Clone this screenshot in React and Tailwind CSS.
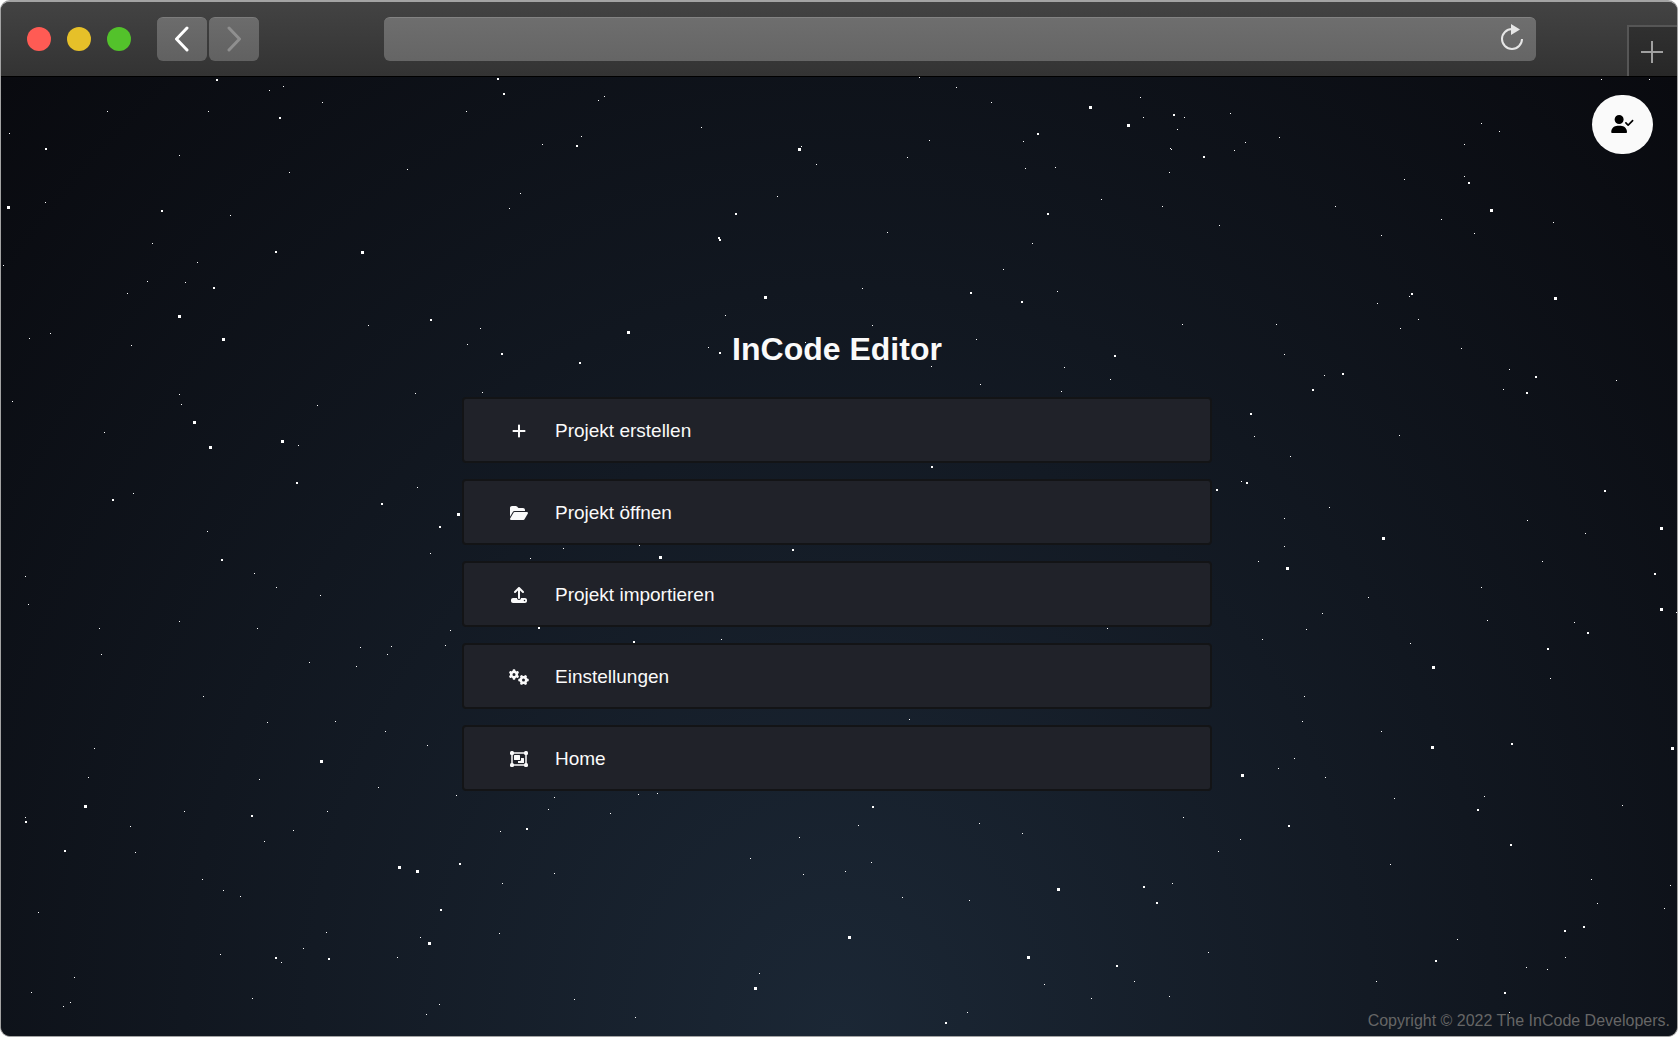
import React from "react";
import {
  FaFolderOpen,
  FaGears,
  FaPlus,
  FaUpload,
  FaUserCheck,
} from "react-icons/fa6";

const SMALL_STARS = [
  [269,90],[283,86],[322,102],[107,111],[208,111],[466,111],[9,133],[179,155],[289,172],[407,169],
  [45,202],[230,215],[152,243],[197,262],[147,281],[185,282],[127,293],[3,265],[50,333],[29,338],
  [131,345],[368,325],[480,328],[467,344],[179,394],[181,404],[12,401],[317,405],[415,393],[482,392],
  [104,432],[298,445],[133,493],[417,487],[207,531],[430,553],[563,548],[639,545],[598,100],[604,96],
  [701,127],[581,136],[542,144],[801,146],[816,164],[520,193],[509,208],[777,196],[725,315],[708,347],
  [805,342],[919,77],[956,87],[991,102],[1140,97],[1143,117],[1184,117],[1230,113],[1177,129],[1023,141],
  [929,140],[907,157],[1245,142],[1234,150],[1279,137],[1170,148],[1171,149],[1025,168],[1055,167],[1169,172],
  [1101,199],[1162,206],[1219,225],[887,232],[1032,243],[1003,269],[1335,206],[1404,179],[1464,144],[1481,123],
  [1499,131],[1464,176],[1441,219],[1474,233],[1381,235],[1553,222],[1601,79],[1649,79],[862,288],[1057,291],
  [872,325],[1182,324],[1276,324],[1377,303],[1409,296],[1418,319],[1400,328],[976,339],[931,366],[1064,367],
  [1110,379],[980,384],[1061,391],[1284,354],[1324,375],[1461,348],[1509,369],[1503,389],[1616,380],[1254,436],
  [1399,435],[1290,456],[1241,481],[1329,507],[1284,518],[1284,546],[1527,520],[1585,533],[25,576],[28,604],
  [254,573],[276,587],[320,595],[179,621],[99,628],[257,628],[101,654],[360,647],[391,646],[387,654],
  [309,662],[356,666],[450,630],[445,645],[203,696],[267,722],[335,721],[385,731],[94,748],[427,745],
  [88,777],[259,779],[378,787],[456,795],[184,811],[327,811],[25,817],[130,826],[293,830],[264,841],
  [135,852],[500,831],[548,809],[554,797],[610,813],[638,794],[657,793],[554,873],[502,883],[202,879],
  [223,890],[240,896],[38,912],[326,932],[420,937],[499,933],[303,948],[220,954],[281,962],[397,957],
  [74,977],[31,992],[70,1002],[63,1006],[252,998],[439,1004],[426,1014],[574,999],[635,1017],[759,973],
  [750,858],[799,837],[803,874],[530,558],[721,639],[1258,561],[1542,561],[1481,587],[1368,597],[1322,613],
  [1306,629],[1262,639],[1107,628],[1487,620],[1574,622],[1410,643],[1550,678],[1676,612],[1304,696],[1302,721],
  [1381,731],[909,719],[1294,758],[1278,768],[1325,777],[1394,798],[1484,796],[1622,805],[858,825],[979,823],
  [1022,833],[1183,817],[1240,839],[1218,851],[871,862],[845,871],[902,897],[969,900],[1172,883],[1390,864],
  [1591,879],[1670,885],[1597,903],[1664,908],[1457,939],[1208,952],[1565,957],[1526,967],[1547,969],[1376,981],
  [1134,981],[1044,984],[1091,998],[1169,996],[967,1012],[1509,1012],
];

const MEDIUM_STARS = [
  [216,79],[497,78],[503,93],[279,117],[45,148],[576,145],[161,210],[275,251],[213,287],[430,319],
  [501,353],[579,362],[735,213],[718,237],[719,239],[719,352],[296,482],[112,499],[381,503],[439,526],
  [1173,114],[1037,133],[1203,156],[1468,182],[1047,213],[970,292],[1021,301],[1411,293],[1114,355],[1342,373],
  [1312,389],[1535,376],[1526,392],[1250,413],[931,466],[1246,482],[1216,489],[1604,490],[792,549],[221,559],
  [538,627],[633,641],[25,821],[251,815],[64,850],[526,828],[459,863],[440,909],[275,957],[328,958],
  [1654,573],[1587,632],[1547,648],[1511,743],[1477,809],[872,806],[1288,825],[1510,844],[1143,886],[1156,902],
  [1564,930],[1583,926],[1435,960],[1116,965],[1504,992],[945,1022],
];

const LARGE_STARS = [
  [281,440],[7,206],[361,251],[178,315],[222,338],[193,421],[209,446],[627,331],[764,296],[798,148],
  [457,513],[659,556],[1089,106],[1127,124],[1490,209],[1554,297],[1382,537],[1660,527],[320,760],[84,805],
  [398,866],[416,870],[428,942],[754,987],[1286,567],[1660,608],[1432,666],[1431,746],[1671,747],[1241,774],
  [1057,888],[848,936],[1027,956],
];

const starPath = (stars, size) =>
  stars.map(([x, y]) => `M${x} ${y}h${size}v${size}h-${size}z`).join("");

const STAR_PATH =
  starPath(SMALL_STARS, 1) + starPath(MEDIUM_STARS, 2) + starPath(LARGE_STARS, 3);

function Stars() {
  return (
    <svg aria-hidden="true" className="pointer-events-none absolute inset-0 size-full">
      <path
        d={STAR_PATH}
        fill="#fff"
        transform="translate(-1 -77)"
        shapeRendering="crispEdges"
      />
    </svg>
  );
}

function ObjectGroupIcon({ className }) {
  return (
    <svg viewBox="0 0 18 16" className={className} aria-hidden="true">
      <g fill="currentColor">
        <rect x="0" y="0" width="4" height="4" rx="1.500" />
        <rect x="14" y="0" width="4" height="4" rx="1.500" />
        <rect x="0" y="12" width="4" height="4" rx="1.500" />
        <rect x="14" y="12" width="4" height="4" rx="1.500" />
        <rect x="4" y="4" width="6" height="5" rx="0.500" />
        <path d="M11 7h2.500a.5.5 0 0 1 .5.5v4a.5.5 0 0 1-.5.5h-5a.5.5 0 0 1-.5-.5V10h2a1 1 0 0 0 1-1z" />
      </g>
      <path d="M2 2h14v12H2z" fill="none" stroke="currentColor" strokeWidth="1.500" />
    </svg>
  );
}

function NavButton({ label, path, className }) {
  return (
    <button
      type="button"
      aria-label={label}
      className={`flex h-11 w-[50px] items-center justify-center rounded-md border-t border-[#7c7c7c] bg-linear-to-b from-[#6c6c6c] to-[#616161] ${className}`}
    >
      <svg
        width="16"
        height="26"
        viewBox="0 0 16 26"
        fill="none"
        stroke="currentColor"
        strokeWidth="3"
        strokeLinecap="round"
        strokeLinejoin="round"
        className="mb-0.5"
      >
        <path d={path} />
      </svg>
    </button>
  );
}

function TitleBar() {
  return (
    <header className="flex h-[75px] shrink-0 items-start border-b border-black bg-linear-to-b from-[#434343] to-[#333333]">
      <div className="flex gap-4 pt-[25px] pl-[26px]">
        <button type="button" aria-label="Fenster schließen" className="size-6 rounded-full bg-[#ff5b54]" />
        <button type="button" aria-label="Minimieren" className="size-6 rounded-full bg-[#e6c029]" />
        <button type="button" aria-label="Maximieren" className="size-6 rounded-full bg-[#53c22b]" />
      </div>
      <div className="flex gap-0.5 pt-[15px] pl-[26px]">
        <NavButton label="Zurück" path="M13 2 2.500 13 13 24" className="text-white" />
        <NavButton label="Vorwärts" path="M3 2 13.500 13 3 24" className="text-[#8f8f8f]" />
      </div>
      <div className="min-w-0 flex-1 pt-[15px] pr-[91px] pl-[125px]">
        <div className="flex h-11 items-center rounded-md border-t border-[#838383] bg-linear-to-b from-[#6e6e6e] to-[#656565]">
          <input
            type="text"
            aria-label="Adresse"
            className="h-full min-w-0 flex-1 bg-transparent px-3 text-white outline-none"
          />
          <button type="button" aria-label="Neu laden" className="mr-3 mb-1.5 text-[#e6e6e6]">
            <svg width="24" height="28" viewBox="0 0 24 28" fill="none">
              <path d="M22 16A10 10 0 1 1 12 6" stroke="currentColor" strokeWidth="2" />
              <path d="M11 1v11l9-5.500z" fill="currentColor" />
            </svg>
          </button>
        </div>
      </div>
      <button
        type="button"
        aria-label="Neuer Tab"
        className="mt-[23px] flex h-[51px] w-[50px] items-center justify-center border-t-2 border-l-2 border-[#565656] bg-linear-to-b from-[#303030] to-[#272727] pr-0.5 text-[#a0a0a0]"
      >
        <svg width="22" height="22" viewBox="0 0 22 22" fill="none" stroke="currentColor" strokeWidth="2">
          <path d="M11 0v22M0 11h22" />
        </svg>
      </button>
    </header>
  );
}

const MENU = [
  { label: "Projekt erstellen", Icon: FaPlus },
  { label: "Projekt öffnen", Icon: FaFolderOpen },
  { label: "Projekt importieren", Icon: FaUpload },
  { label: "Einstellungen", Icon: FaGears },
  { label: "Home", Icon: ObjectGroupIcon },
];

export default function App() {
  return (
    <div className="flex min-h-screen flex-col overflow-hidden rounded-[10px] border border-t-2 border-[#a3a3a3] bg-[#333333] font-['Liberation_Sans',Arial,sans-serif]">
      <TitleBar />
      <div className="relative flex flex-1 flex-col bg-[radial-gradient(ellipse_at_bottom,#1b2735_0%,#090a0f_100%)]">
        <Stars />
        <div className="flex justify-end pt-[18px] pr-6">
          <button
            type="button"
            aria-label="Benutzerkonto"
            className="relative flex h-[59px] w-[61px] items-center justify-center rounded-full bg-[#fafafa] pb-px text-black"
          >
            <FaUserCheck className="h-[18px] w-[23px]" />
          </button>
        </div>
        <main className="relative flex flex-1 flex-col items-center justify-center pr-1 pb-10">
          <h1 className="mb-[30px] text-[32px] leading-9 font-bold text-[#fafafa]">InCode Editor</h1>
          <nav className="flex w-full max-w-[750px] flex-col gap-4">
            {MENU.map(({ label, Icon }) => (
              <button
                key={label}
                type="button"
                className="flex h-[66px] items-center gap-[26px] rounded border-2 border-[#131416] bg-[#202229] pt-px pl-[45px] text-left text-[19px] leading-6 text-[#fafafa]"
              >
                <Icon className="h-4 w-5 shrink-0" />
                {label}
              </button>
            ))}
          </nav>
        </main>
        <footer className="relative h-7 pt-px pr-[7px] text-right text-base leading-6 text-[#666666]">
          Copyright © 2022 The InCode Developers.
        </footer>
      </div>
    </div>
  );
}
